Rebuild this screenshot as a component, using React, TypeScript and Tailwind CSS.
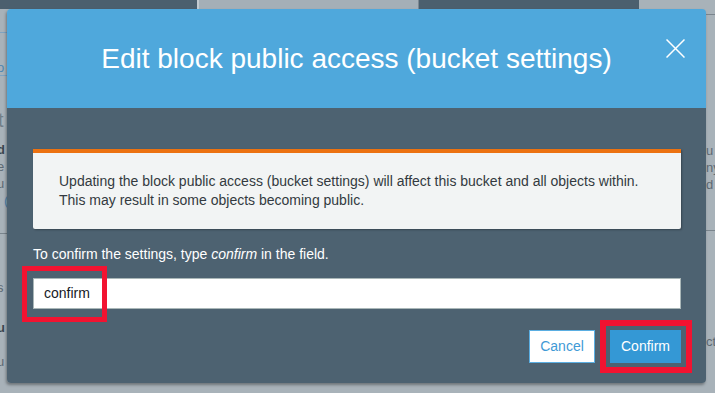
// Edge fragments of the page that sits behind the dimmed overlay.
function LeftEdge() {
  return (
    <div className="w-[7px] shrink-0 overflow-hidden flex flex-col text-[13px] leading-[17px]">
      <div className="h-[23px]" />
      <div className="h-px bg-[#7fa3c0]" />
      <div className="h-[42px] pt-[26px] -ml-[3px] text-[#4f86b0]">o</div>
      <div className="h-px bg-[#7fa3c0]" />
      <div className="h-[56px] pt-[34px] -ml-[2px] text-[20px] leading-[20px] text-[#737f88]">t</div>
      <div className="pt-[9px] -ml-[3px] font-bold text-[#3b4750]">d</div>
      <div className="-ml-[3px] text-[#5d6973]">e</div>
      <div className="-ml-[3px] text-[#5d6973]">u</div>
      <div className="ml-[4px] text-[#4f86b0]">(</div>
      <div className="h-[24px]" />
      <div className="h-px bg-[#7a858d]" />
      <div className="pt-[45px] -ml-[3px] text-[#5d6973]">s</div>
      <div className="pt-[23px] -ml-[3px] font-bold text-[#3b4750]">u</div>
      <div className="-ml-[3px] text-[#5d6973]">i</div>
      <div className="-ml-[3px] text-[#5d6973]">u</div>
    </div>
  );
}

function RightEdge() {
  return (
    <div className="w-[9px] shrink-0 overflow-hidden flex flex-col text-[13px] leading-[17px] text-[#5d6973]">
      <div className="h-[5px]" />
      <div className="h-px bg-[#7a858d]" />
      <div className="pt-[127px]">u</div>
      <div>ny</div>
      <div>d</div>
      <div className="h-[37px]" />
      <div className="h-px bg-[#7a858d]" />
      <div className="pt-[102px]">ct</div>
    </div>
  );
}

export default function App() {
  return (
    <div className="relative w-[715px] h-[393px] overflow-hidden bg-[#a8b2b9] font-['Liberation_Sans',Arial,sans-serif]">
      <div className="flex h-[9px]">
        <div className="w-[197px] bg-[#4b5f6e]" />
        <div className="w-[2px] bg-[#c3cad0]" />
        <div className="w-[219px] bg-[#a4afb7]" />
        <div className="w-px bg-[#7d8891]" />
        <div className="w-[220px] bg-[#4b5f6e]" />
        <div className="flex-1 bg-[#a8b2b9]" />
      </div>
      <div className="flex h-[384px]">
        <LeftEdge />
        <div className="flex-1" />
        <RightEdge />
      </div>

      {/* modal */}
      <div className="absolute left-[7px] top-[9px] w-[699px] h-[374px] rounded-[4px] overflow-hidden shadow-[-1px_2px_3px_rgba(0,0,0,0.35)] flex flex-col">
        <div className="relative h-[99px] shrink-0 bg-[#4fa8dc] flex items-center justify-center">
          <h1 className="text-[28px] leading-[32px] text-white">Edit block public access (bucket settings)</h1>
          <button type="button" className="absolute left-[659px] top-[30px]">
            <svg width="19" height="19" viewBox="0 0 19 19" fill="none" stroke="white" strokeWidth="1.5">
              <path d="M0.5 0.5 L18.5 18.5 M18.5 0.5 L0.5 18.5" />
            </svg>
          </button>
        </div>
        <div className="flex-1 bg-[#4d6271] pl-[26px] pr-[25px] pt-[41px] pb-[20px] flex flex-col">
          <div className="border-t-4 border-[#ec7211] bg-[#f2f4f4] rounded-b-[2px] shadow-[1px_1px_2px_rgba(0,0,0,0.3)] px-[26px] py-[19px] text-[14px] leading-[19px] text-[#333a40]">
            Updating the block public access (bucket settings) will affect this bucket and all objects within.
            <br />
            This may result in some objects becoming public.
          </div>
          <p className="mt-[16px] text-[14px] leading-[19px] text-white">
            To confirm the settings, type <i>confirm</i> in the field.
          </p>
          <div className="mt-[14px] h-[31px] border border-[#aab7b8] bg-white pl-[10px] flex items-center text-[14px] text-[#16191f]">
            confirm
          </div>
          <div className="mt-[21px] flex justify-end gap-[15px]">
            <button
              type="button"
              className="h-[33px] w-[66px] bg-white border border-[#5aaee2] text-[14px] text-[#3f9ad6]"
            >
              Cancel
            </button>
            <button type="button" className="h-[33px] w-[71px] bg-[#3498d5] text-[14px] text-white">
              Confirm
            </button>
          </div>
        </div>
      </div>

      {/* red highlight boxes */}
      <div className="absolute left-[22px] top-[266px] w-[85px] h-[56px] border-[5px] border-[#f21331]" />
      <div className="absolute left-[600px] top-[320px] w-[92px] h-[53px] border-[6px] border-[#f21331]" />
    </div>
  );
}
